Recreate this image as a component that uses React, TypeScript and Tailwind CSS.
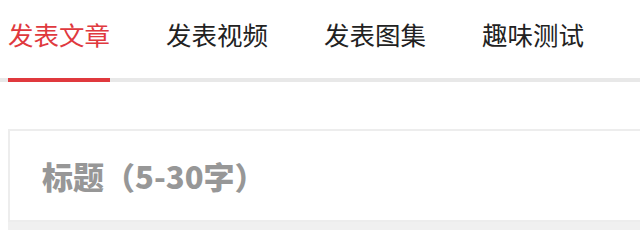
const tabs = ["发表文章", "发表视频", "发表图集", "趣味测试"];

const App = () => {
  return (
    <div
      className="w-[640px] h-[230px] overflow-hidden bg-white"
      style={{ fontFamily: '"Noto Sans CJK SC", "Noto Sans", sans-serif' }}
    >
      {/* Tabs */}
      <nav className="flex gap-[56px] pl-[8px] border-b-[4px] border-[#e8e8e8]">
        {tabs.map((t, i) => (
          <div
            key={t}
            className={
              i === 0
                ? "-mb-[4px] pt-[21px] pb-[31px] border-b-[4px] border-[#e0393e] text-[#e0393e]"
                : "-mb-[4px] pt-[21px] pb-[31px] border-b-[4px] border-transparent text-[#222222]"
            }
          >
            <span className="block text-[25.5px] leading-[26px]">{t}</span>
          </div>
        ))}
      </nav>

      {/* Title input */}
      <div className="ml-[8px] mt-[47px] h-[93px] flex items-center pl-[32px] border-[2px] border-r-0 border-[#ededed] bg-white">
        <span className="text-[31px] font-black text-[#979797] leading-none">标题（5-30字）</span>
      </div>
      <div className="ml-[8px] h-[20px] bg-[#f0f0f0]" />
    </div>
  );
};

export default App;
